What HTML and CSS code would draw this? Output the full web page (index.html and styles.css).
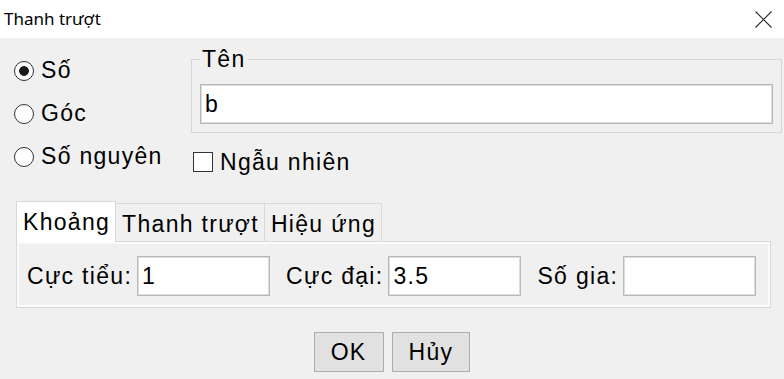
FILE: index.html
```html
<!DOCTYPE html>
<html lang="vi">
<head>
  <meta charset="UTF-8">
  <title>Thanh trượt</title>
  <link rel="stylesheet" href="styles.css">
</head>
<body>
  <div class="titlebar">
    <span class="title">Thanh trượt</span>
    <svg class="close" width="17" height="17" viewBox="0 0 17 17">
      <path d="M0.5 0.5L16.5 16.5M16.5 0.5L0.5 16.5" stroke="#2b2b2b" stroke-width="1.1" fill="none"/>
    </svg>
  </div>

  <div class="top">
    <div class="kinds">
      <label class="option"><input type="radio" name="kind" checked>Số</label>
      <label class="option"><input type="radio" name="kind">Góc</label>
      <label class="option"><input type="radio" name="kind">Số nguyên</label>
    </div>
    <div class="name-col">
      <fieldset class="name-box">
        <legend>Tên</legend>
        <input type="text" class="field" value="b">
      </fieldset>
      <label class="random"><input type="checkbox">Ngẫu nhiên</label>
    </div>
  </div>

  <div class="tabs">
    <div class="tab-strip">
      <div class="tab active">Khoảng</div>
      <div class="tab">Thanh trượt</div>
      <div class="tab">Hiệu ứng</div>
    </div>
    <div class="tab-panel">
      <label class="lbl">Cực tiểu:</label>
      <input type="text" class="field small" value="1">
      <label class="lbl">Cực đại:</label>
      <input type="text" class="field small" value="3.5">
      <label class="lbl">Số gia:</label>
      <input type="text" class="field small" value="">
    </div>
  </div>

  <div class="buttons">
    <button class="btn">OK</button>
    <button class="btn">Hủy</button>
  </div>
</body>
</html>
```

FILE: styles.css
```css
body {
  margin: 0;
  background: #f0f0f0;
  font-family: "Liberation Sans", Arial, sans-serif;
  font-size: 23px;
  letter-spacing: 1.3px;
  color: #000;
}
.titlebar {
  height: 38px;
  background: #fff;
  display: flex;
  align-items: center;
  justify-content: space-between;
  padding: 0 12px 0 4px;
}
.title {
  font-family: "Noto Sans", "Open Sans", sans-serif;
  font-size: 17px;
  letter-spacing: 0;
  line-height: 38px;
}
.close {
  display: block;
}

/* top part: kind radios + name */
.top {
  display: flex;
  padding: 8px 2px 0 14px;
}
.kinds {
  width: 177px;
  flex: none;
  padding-top: 3px;
}
.option {
  display: flex;
  align-items: center;
  height: 43px;
  white-space: nowrap;
}
.option input {
  appearance: none;
  width: 20px;
  height: 20px;
  margin: 0 7px 0 0;
  border: 1px solid #333;
  border-radius: 50%;
  background: #fff;
}
.option input:checked {
  background: radial-gradient(circle, #1a1a1a 0 4.5px, #fff 5.2px);
}
.name-col {
  flex: 1;
}
.name-box {
  margin: 0;
  min-width: 0;
  padding: 12px 8px 8px 8px;
  border: 1px solid #d6d6d6;
}
.name-box legend {
  padding: 0 2px;
  line-height: 26px;
}
.field {
  box-sizing: border-box;
  width: 100%;
  height: 40px;
  margin: 0;
  padding: 0 4px;
  border: 1px solid #b9b9b9;
  box-shadow: inset 0 0 0 1px #dcdcdc;
  background: #fff;
  font: inherit;
  letter-spacing: inherit;
}
.random {
  display: flex;
  align-items: center;
  line-height: 26px;
  margin: 16px 0 0 2px;
}
.random input {
  appearance: none;
  width: 20px;
  height: 20px;
  margin: 0 7px 0 0;
  border: 1px solid #333;
  background: #fff;
}

/* tabs */
.tabs {
  margin: 23px 13px 0 16px;
}
.tab-strip {
  display: flex;
  align-items: flex-end;
  height: 40px;
}
.tab {
  box-sizing: border-box;
  height: 38px;
  line-height: 36px;
  padding: 2px 5px 0 6px;
  border: 1px solid #d9d9d9;
  border-bottom: none;
  margin-left: -1px;
  background: #f0f0f0;
  white-space: nowrap;
}
.tab.active {
  height: 41px;
  line-height: 40px;
  padding-top: 0;
  margin-left: 0;
  margin-bottom: -1px;
  background: #fff;
  position: relative;
  z-index: 1;
}
.tab-panel {
  display: flex;
  align-items: center;
  padding: 14px 0 11px 10px;
  border: 1px solid #d9d9d9;
  box-shadow: inset 0 0 0 2px #fbfbfb;
}
.lbl {
  flex: none;
  white-space: nowrap;
  margin-right: 5px;
}
.field.small {
  flex: none;
  width: 133px;
  margin-right: 16px;
}

/* OK / Cancel */
.buttons {
  display: flex;
  justify-content: center;
  gap: 8px;
  margin-top: 24px;
}
.btn {
  height: 40px;
  padding: 0 16px;
  border: 1px solid #adadad;
  background: #e1e1e1;
  font: inherit;
  letter-spacing: inherit;
  color: #000;
}
```
